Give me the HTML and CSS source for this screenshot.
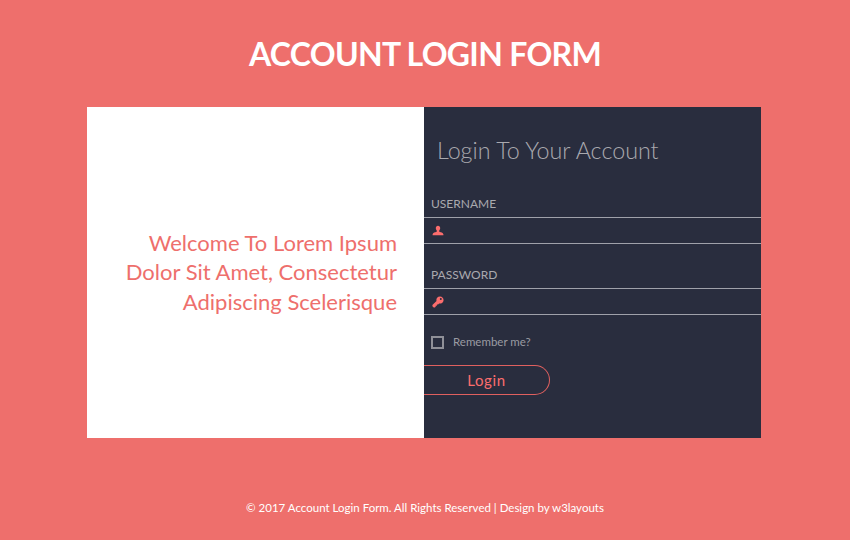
FILE: index.html
```html
<!DOCTYPE html>
<html lang="en">
<head>
<meta charset="UTF-8">
<meta name="viewport" content="width=device-width, initial-scale=1.0">
<title>Account Login Form</title>
<link rel="stylesheet" href="styles.css">
</head>
<body>

<h1 class="page-title">ACCOUNT LOGIN FORM</h1>

<div class="card">
    <div class="welcome">
        <p>Welcome To Lorem Ipsum Dolor Sit Amet, Consectetur Adipiscing Scelerisque</p>
    </div>
    <form class="login">
        <h2 class="login-title">Login To Your Account</h2>

        <label class="field-label" for="username">USERNAME</label>
        <div class="field">
            <svg class="field-icon" viewBox="0 0 12 12"><path d="M6 .8C4.600.8 3.800 1.800 3.800 3.100c0 1.100.5 2 1 2.600.3.400.2.900-.3 1.100C3 7.400 1 7.700.6 9.200V10.200h10.800V9.200C11 7.700 9 7.400 7.500 6.800c-.5-.2-.6-.7-.3-1.100.5-.6 1-1.500 1-2.600C8.200 1.800 7.400.8 6 .8z"/></svg>
            <input type="text" id="username">
        </div>

        <label class="field-label" for="password">PASSWORD</label>
        <div class="field">
            <svg class="field-icon" viewBox="0 0 12 12"><path fill-rule="evenodd" d="M8 .4a3.600 3.600 0 0 0-3.500 4.500L.4 9v1.300l1.300 1.300h1.200l.8-.8V9.700h1.200V8.500h1.200l1-1A3.600 3.600 0 1 0 8 .4zm.8 1.500a1 1 0 1 1 0 2 1 1 0 0 1 0-2z"/></svg>
            <input type="password" id="password">
        </div>

        <label class="remember"><span class="check"></span>Remember me?</label>

        <button type="button" class="login-btn">Login</button>
    </form>
</div>

<p class="footer">© 2017 Account Login Form. All Rights Reserved | Design by w3layouts</p>

</body>
</html>
```

FILE: styles.css
```css
body {
    margin: 0;
    background-color: #ee6f6c;
    font-family: Lato, sans-serif;
    height: 540px;
    overflow: hidden;
}

.page-title {
    margin: 0;
    padding-top: 35px;
    height: 107px;
    box-sizing: border-box;
    text-align: center;
    color: #fff;
    font-size: 32px;
    line-height: 38px;
    font-weight: 700;
    letter-spacing: -0.7px;
}

.card {
    display: flex;
    width: 674px;
    height: 331px;
    margin-left: 87px;
}

.welcome {
    width: 337px;
    background-color: #fff;
    display: flex;
    align-items: center;
    justify-content: flex-end;
    padding: 0 27px 0 20px;
    box-sizing: border-box;
}

.welcome p {
    margin: 0;
    padding-bottom: 1px;
    text-align: right;
    color: #ee6f6c;
    font-size: 22px;
    line-height: 29.5px;
}

.login {
    width: 337px;
    background-color: #292d3e;
    color: #a9a9ae;
}

.login-title {
    margin: 0;
    padding: 30px 0 0 13px;
    height: 86px;
    box-sizing: border-box;
    font-size: 23.3px;
    line-height: 26px;
    font-weight: 300;
}

.field-label {
    display: block;
    padding: 1px 0 0 7px;
    height: 23px;
    font-size: 12px;
    line-height: 20px;
}

.field {
    display: flex;
    align-items: center;
    height: 25px;
    margin-bottom: 20px;
    border-top: 1px solid #9fa1aa;
    border-bottom: 1px solid #9fa1aa;
}

.field-icon {
    width: 12px;
    height: 12px;
    margin-left: 8px;
    fill: #fb6d6d;
}

.field input {
    flex: 1;
    min-width: 0;
    height: 100%;
    padding: 0 8px;
    border: none;
    outline: none;
    background: transparent;
    color: #fff;
}

.remember {
    display: flex;
    align-items: center;
    padding-left: 7px;
    margin-top: 19px;
    color: #9a9ba2;
    font-size: 11.5px;
    line-height: 14px;
}

.check {
    width: 9px;
    height: 9px;
    margin-right: 9px;
    border: 2px solid #8f9098;
}

.login-btn {
    display: block;
    width: 126px;
    height: 30px;
    margin-top: 16px;
    padding: 0;
    border: 1px solid #e0605f;
    border-left: none;
    border-radius: 0 15px 15px 0;
    background: transparent;
    color: #fb6d6d;
    font-family: Lato, sans-serif;
    font-size: 15px;
    letter-spacing: 0.6px;
}

.footer {
    margin: 62px 0 0;
    text-align: center;
    color: #fff;
    font-size: 11.5px;
    line-height: 16px;
}
```
